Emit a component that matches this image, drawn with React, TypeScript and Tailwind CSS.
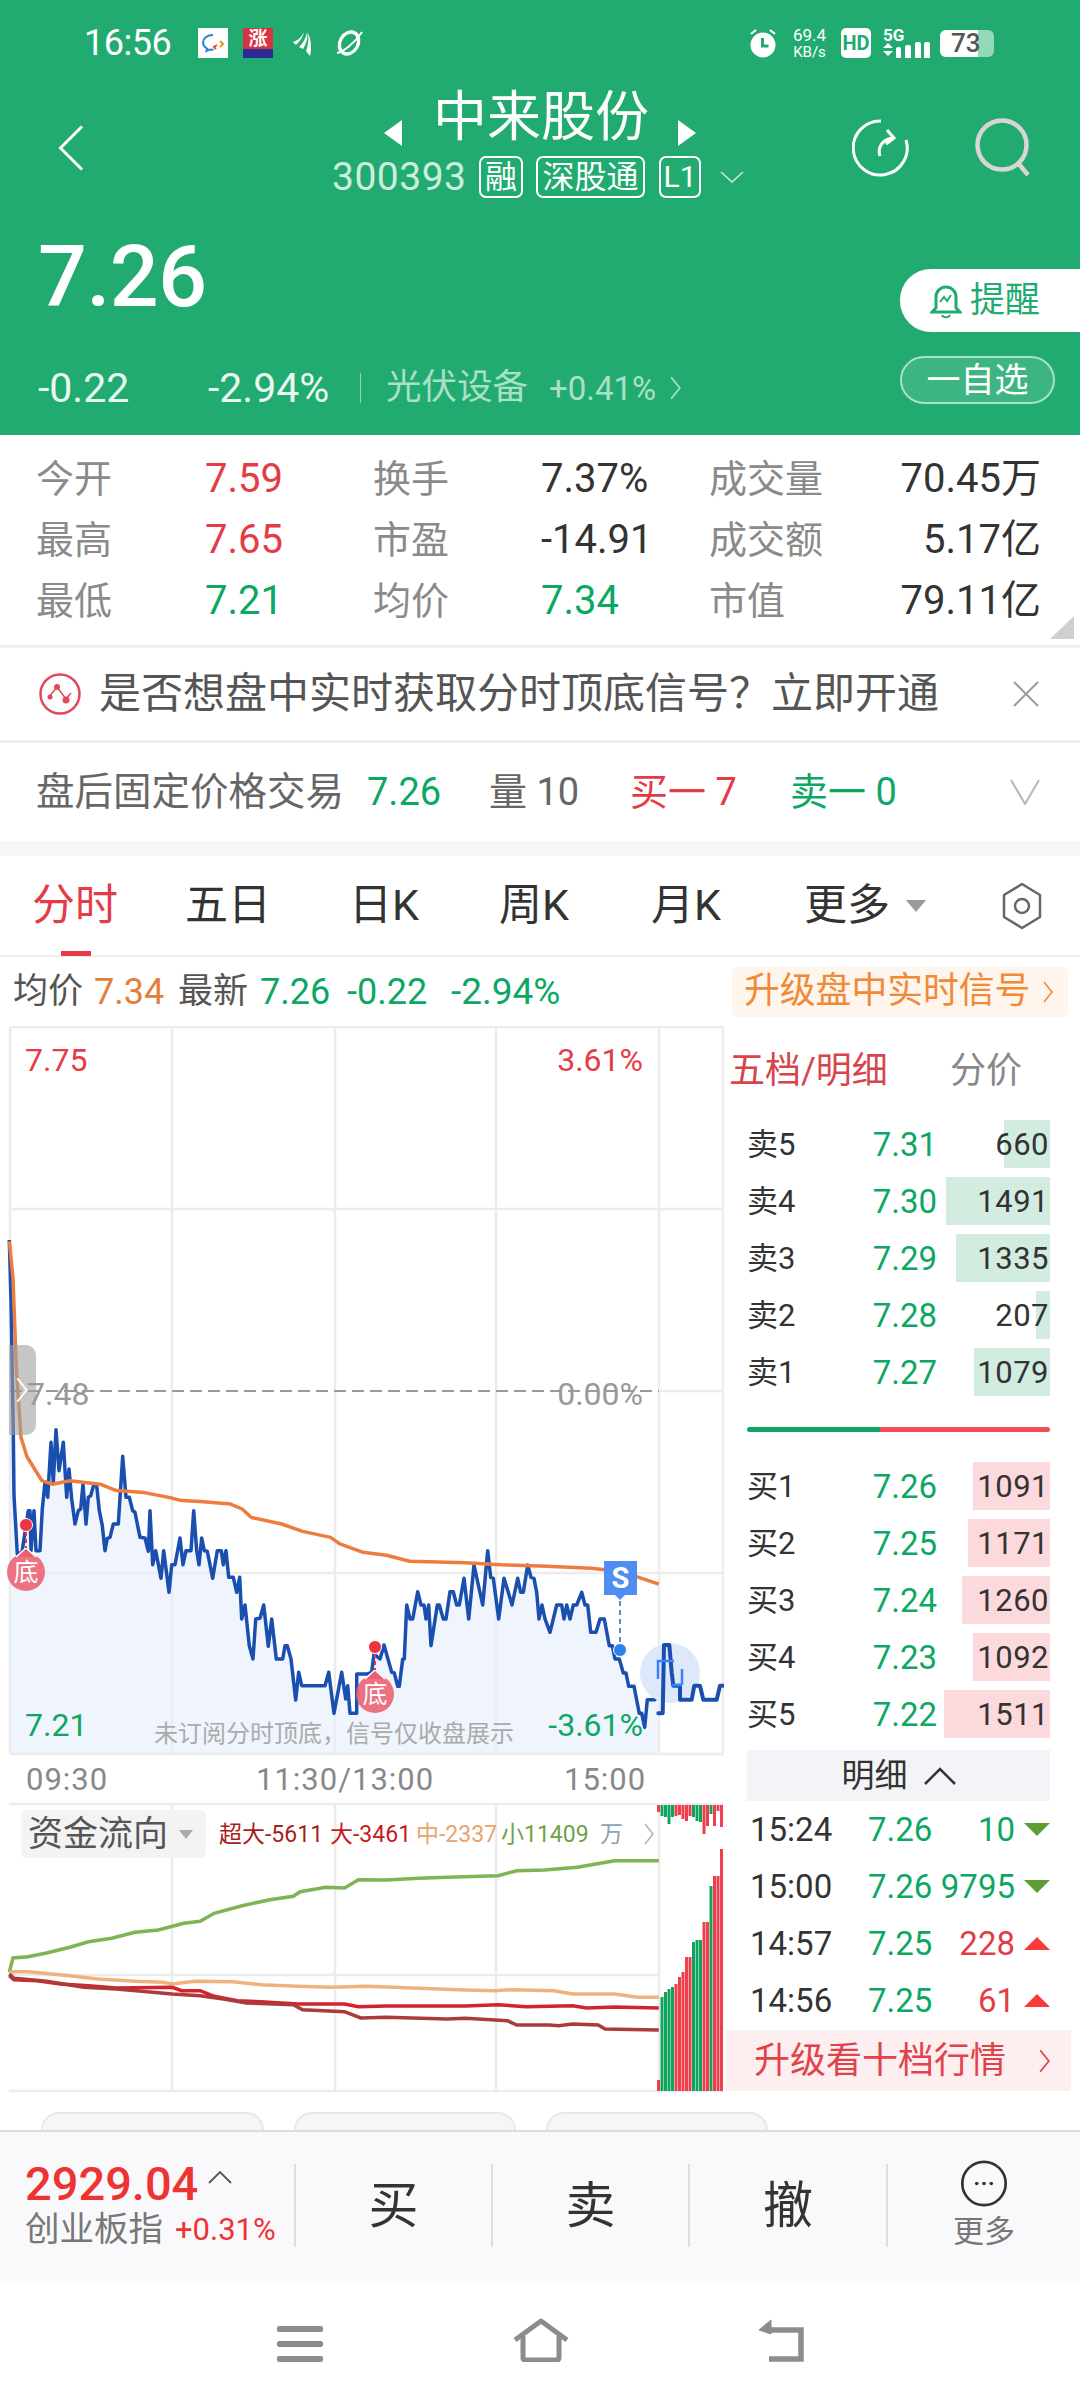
import { ReactNode } from "react";

const RED = "text-[#e43c46]";
const GREEN = "text-[#0da764]";

type Pt = [number, number];

const place = (pts: Pt[], kx: number, ky: number, ox: number, oy: number): Pt[] =>
  pts.map(([x, y]) => [x / kx + ox, y / ky + oy]);

const line = (pts: Pt[]) => pts.map(([x, y]) => `${x.toFixed(1)},${y.toFixed(1)}`).join(" ");

// morning half of the price line
const PRICE_AM: Pt[] = [[28,-177],[33,0],[40,400],[42,590],[52,765],[66,760],[75,700],[85,635],[90,635],[93,755],[102,635],[108,755],[120,755],[127,630],[135,550],[143,595],[153,430],[160,550],[168,392],[177,515],[190,430],[200,595],[207,510],[215,600],[225,675],[235,635],[242,630],[249,555],[258,675],[265,595],[272,590],[282,555],[290,560],[298,635],[307,680],[315,755],[322,718],[330,715],[340,675],[355,675],[368,472],[378,595],[388,595],[398,635],[405,640],[420,715],[435,717],[445,757],[450,635],[458,797],[467,755],[483,838],[491,755],[507,880],[515,797],[525,797],[540,717],[549,797],[558,755],[573,755],[581,635],[590,755],[597,797],[605,717],[613,755],[622,757],[638,838],[652,755],[664,755],[670,797],[678,755],[686,835],[700,835],[710,880],[719,835],[725,960],[735,918],[748,1040],[759,1080],[767,960],[780,958],[791,918],[805,1042],[815,960],[829,1080],[848,1080],[855,1040],[862,1040],[873,1080],[887,1203],[896,1120],[905,1160],[975,1160],[986,1120],[1002,1243],[1025,1120],[1037,1200],[1043,1160],[1050,1243],[1070,1243]];

// afternoon half of the price line
const PRICE_PM: Pt[] = [[-10,585],[10,585],[22,585],[35,580],[42,525],[60,540],[72,498],[95,580],[103,582],[113,622],[118,622],[128,540],[133,540],[140,378],[150,420],[158,420],[173,338],[183,378],[192,378],[198,420],[206,378],[213,500],[232,378],[238,378],[250,420],[258,420],[270,338],[280,338],[290,378],[298,378],[312,298],[326,420],[342,258],[368,378],[383,215],[392,295],[400,298],[416,420],[432,298],[445,340],[456,378],[473,298],[482,340],[490,340],[503,258],[513,295],[522,298],[530,340],[537,420],[546,378],[555,420],[570,460],[580,420],[590,378],[605,378],[612,420],[620,378],[630,420],[640,378],[650,378],[665,340],[675,378],[683,378],[692,460],[708,460],[720,420],[733,420],[748,500],[757,500],[765,540],[778,540],[790,582],[798,582],[806,622],[822,622],[838,703],[845,703],[854,745],[862,662],[885,662],[895,620]];

const AFTER_HOURS: Pt[] = [[895,703],[908,703],[912,498],[928,498],[935,580],[940,620],[960,620],[960,662],[995,662],[1003,620],[1020,620],[1030,662],[1070,662],[1080,620],[1088,620]];

const AVG: Pt[] = [[20,447],[28,520],[35,700],[45,840],[58,880],[90,928],[112,935],[150,928],[215,935],[250,948],[310,952],[365,962],[390,968],[430,970],[495,975],[520,985],[540,1002],[605,1015],[650,1030],[710,1042],[730,1055],[780,1072],[830,1078],[880,1090],[920,1091],[1000,1093],[1075,1097],[1175,1100],[1270,1104],[1330,1110],[1380,1125],[1415,1136]];

const FLOW_SMALL: Pt[] = [[20,580],[28,537],[60,533],[100,522],[150,505],[190,488],[240,478],[290,460],[340,453],[395,433],[430,427],[460,403],[520,380],[580,362],[630,352],[645,338],[700,325],[740,327],[770,302],[830,303],[900,298],[960,295],[1070,290],[1110,275],[1170,273],[1240,265],[1320,245],[1415,245]];
const FLOW_MID: Pt[] = [[20,580],[30,578],[60,578],[150,590],[210,600],[290,607],[350,610],[370,615],[420,607],[500,608],[560,617],[640,622],[710,625],[790,622],[900,628],[1000,633],[1060,635],[1100,632],[1190,635],[1230,645],[1320,645],[1370,655],[1415,655]];
const FLOW_BIG: Pt[] = [[20,590],[30,602],[80,605],[130,615],[190,620],[250,627],[370,625],[390,635],[430,635],[460,652],[510,665],[560,668],[640,675],[740,675],[770,683],[830,681],[1000,681],[1070,677],[1130,683],[1230,680],[1260,687],[1320,684],[1415,687]];
const FLOW_HUGE: Pt[] = [[20,585],[30,598],[100,607],[180,625],[250,630],[370,645],[430,650],[480,660],[530,672],[630,677],[650,692],[740,698],[775,717],[830,715],[960,720],[1000,718],[1090,725],[1110,738],[1180,738],[1200,740],[1230,735],[1285,738],[1300,750],[1415,753]];

// after-hours volume: colour, bottom bar top y, hanging bar bottom y
const FLOW_BARS: [string, number, number][] = [
  ["#ef3f4d", 2081, 1813], ["#0fa35e", 1998, 1817], ["#0fa35e", 1993, 1818], ["#0fa35e", 1990, 1825],
  ["#0fa35e", 1988, 1818], ["#ef3f4d", 1985, 1817], ["#ef3f4d", 1978, 1816], ["#ef3f4d", 1973, 1820],
  ["#ef3f4d", 1958, 1822], ["#ef3f4d", 1958, 1817], ["#0fa35e", 1943, 1818], ["#0fa35e", 1941, 1822],
  ["#0fa35e", 1941, 1823], ["#ef3f4d", 1923, 1835], ["#ef3f4d", 1923, 1827], ["#0fa35e", 1887, 1815],
  ["#ef3f4d", 1877, 1827], ["#ef3f4d", 1877, 1812], ["#ef3f4d", 1850, 1828],
];

const ASKS = [
  ["卖5", "7.31", "660", 46], ["卖4", "7.30", "1491", 104], ["卖3", "7.29", "1335", 94],
  ["卖2", "7.28", "207", 14], ["卖1", "7.27", "1079", 76],
] as const;

const BIDS = [
  ["买1", "7.26", "1091", 77], ["买2", "7.25", "1171", 82], ["买3", "7.24", "1260", 88],
  ["买4", "7.23", "1092", 77], ["买5", "7.22", "1511", 106],
] as const;

const TICKS = [
  ["15:24", "7.26", "10", false], ["15:00", "7.26", "9795", false],
  ["14:57", "7.25", "228", true], ["14:56", "7.25", "61", true],
] as const;

function Chevron({ className }: { className?: string }) {
  return (
    <svg viewBox="0 0 12 24" className={className} fill="none" stroke="currentColor" strokeWidth="1.6">
      <path d="M2 2l8 10-8 10" />
    </svg>
  );
}

function StatusBar() {
  return (
    <div className="flex h-[86px] items-center">
      <span className="ml-[84px] w-[94px] text-[36px] leading-none tracking-[-0.5px] text-white">16:56</span>
      <div className="ml-[20px] flex h-[30px] w-[30px] items-center justify-center bg-white">
        <svg viewBox="0 0 30 30" className="h-[30px] w-[30px]" fill="none">
          <path d="M15 7c-6 0-10 3.400-10 7.500 0 2.500 1.500 4.500 4 6l-.5 2.500 3-1.500c1 .2 2.500.3 4 .2" stroke="#2a82d8" strokeWidth="2" />
          <path d="M22 13l3 3-3 3" stroke="#e89a2a" strokeWidth="2.200" />
          <path d="M18 21l-2-2 3-2" stroke="#d8503a" strokeWidth="2" />
        </svg>
      </div>
      <div className="ml-[15px] flex h-[30px] w-[30px] flex-col items-center overflow-hidden bg-[#d83340]">
        <span className="h-[21px] text-[19px] leading-[21px] font-bold text-white">涨</span>
        <span className="h-[9px] w-full bg-[#2c2a94]" />
      </div>
      <svg viewBox="0 0 22 26" className="ml-[19px] h-[26px] w-[22px]" fill="#fff">
        <path d="M1 12c4-1 8-4 11-10-1 5-4 9-8 13zM7 17c3-3 7-8 8-15 1 5 0 11-4 17zM14 21c2-5 3-12 2-18 3 6 4 16 2 23z" />
      </svg>
      <svg viewBox="0 0 30 28" className="ml-[20px] h-[28px] w-[30px]" fill="none" stroke="#fff" strokeWidth="3.400">
        <ellipse cx="15" cy="14" rx="9" ry="11.500" transform="rotate(30 15 14)" />
        <path d="M3 24c6-1 18-10 25-21" strokeWidth="2" />
      </svg>
      <svg viewBox="0 0 28 30" className="ml-[385px] h-[30px] w-[28px]" fill="#fff">
        <circle cx="14" cy="17" r="12.500" />
        <path d="M2 6l5-4M26 6l-5-4" stroke="#fff" strokeWidth="2.200" />
        <path d="M13.500 10v8h6" fill="none" stroke="#22ab70" strokeWidth="3" />
      </svg>
      <div className="ml-[14px] flex w-[37px] flex-col items-center text-white">
        <span className="text-[17px] leading-[18px]">69.4</span>
        <span className="text-[15px] leading-[17px]">KB/s</span>
      </div>
      <div className="ml-[13px] flex h-[30px] w-[30px] items-center justify-center rounded-[5px] bg-white text-[20px] leading-none font-bold text-[#22ab70]">
        HD
      </div>
      <div className="ml-[12px] flex h-[30px] w-[48px] flex-col">
        <span className="text-[17px] leading-[14px] font-bold text-white">5G</span>
        <svg viewBox="0 0 48 16" className="h-[16px] w-[48px]" fill="#fff">
          <path d="M0 6l5-5 5 5zM0 9h10l-5 5zM13 7a2 2 0 012-2h1a2 2 0 012 2v9h-5zM22 5a2 2 0 012-2h2a2 2 0 012 2v11h-6zM32 2a2 2 0 012-2h2a2 2 0 012 2v14h-6zM41 2a2 2 0 012-2h2a2 2 0 012 2v14h-6z" />
        </svg>
      </div>
      <div className="ml-[9px] flex h-[27px] w-[54px] items-center overflow-hidden rounded-[6px] bg-[#93d9b8]">
        <span className="flex h-full w-[38px] shrink-0 items-center bg-white pl-[11px] text-[26px] leading-none font-medium whitespace-nowrap text-[#555]">73</span>
      </div>
    </div>
  );
}

function TitleBar() {
  return (
    <div className="flex h-[124px] items-center">
      <svg viewBox="0 0 26 46" className="ml-[58px] h-[46px] w-[26px]" fill="none" stroke="#fff" strokeWidth="3">
        <path d="M24 1.500L2.500 23 24 44.500" />
      </svg>
      <div className="mb-[8px] ml-[248px] flex w-[412px] flex-col">
        <div className="ml-[52px] flex h-[56px] items-center">
          <span className="mt-[30px] h-0 w-0 border-y-[13px] border-r-[18px] border-y-transparent border-r-white" />
          <span className="ml-[31px] w-[216px] text-[54px] leading-none whitespace-nowrap text-white">中来股份</span>
          <span className="mt-[30px] ml-[29px] h-0 w-0 border-y-[13px] border-l-[18px] border-y-transparent border-l-white" />
        </div>
        <div className="mt-[10px] flex h-[42px] items-center text-white">
          <span className="w-[147px] text-[39px] leading-none tracking-[0.5px] text-[#cdeede]">300393</span>
          <span className="flex h-[42px] w-[44px] items-center justify-center rounded-[7px] border-2 border-white text-[32px] leading-none">融</span>
          <span className="ml-[13px] flex h-[42px] w-[109px] items-center justify-center rounded-[7px] border-2 border-white text-[32px] leading-none whitespace-nowrap">深股通</span>
          <span className="ml-[14px] flex h-[42px] w-[42px] items-center justify-center rounded-[7px] border-2 border-white text-[30px] leading-none">L1</span>
          <svg viewBox="0 0 24 12" className="ml-[19px] h-[12px] w-[24px]" fill="none" stroke="#cdeede" strokeWidth="1.500">
            <path d="M1 1l11 10L23 1" />
          </svg>
        </div>
      </div>
      <svg viewBox="0 0 58 58" className="ml-[108px] h-[58px] w-[58px]" fill="none" stroke="#fff" strokeWidth="3">
        <path d="M29 2A27 27 0 1054 21" />
        <path d="M28 37c-3-9 3-17 13-18M35 11l7 8-8 6" />
      </svg>
      <svg viewBox="0 0 58 60" className="ml-[64px] h-[60px] w-[58px]" fill="none" stroke="#d6d6d6" strokeWidth="4.500">
        <circle cx="28" cy="27" r="24.500" />
        <path d="M44 45l10 12" />
      </svg>
    </div>
  );
}

function QuoteHead() {
  return (
    <div className="flex h-[225px] justify-between">
      <div className="pt-[22px] pl-[38px]">
        <div className="h-[90px] text-[86px] leading-[90px] font-medium tracking-[-0.5px] text-white">7.26</div>
        <div className="mt-[44px] flex h-[44px] items-center whitespace-nowrap">
          <span className="w-[170px] text-[41px] leading-none text-[#e9f8f0]">-0.22</span>
          <span className="w-[152px] text-[41px] leading-none text-[#e9f8f0]">-2.94%</span>
          <span className="h-[30px] w-[1px] bg-[#8fd6b5]" />
          <span className="ml-[25px] text-[35.5px] leading-none text-[#a9e0c6]">光伏设备</span>
          <span className="ml-[21px] text-[33px] leading-none text-[#a9e0c6]">+0.41%</span>
          <Chevron className="ml-[13px] h-[28px] w-[13px] text-[#a9e0c6]" />
        </div>
      </div>
      <div className="flex w-[180px] flex-col pt-[59px]">
        <div className="flex h-[63px] items-center rounded-l-[31px] bg-white pl-[30px]">
          <svg viewBox="0 0 32 36" className="h-[36px] w-[32px]" fill="none" stroke="#22ab70" strokeWidth="3">
            <path d="M6 25V14a10 10 0 0120 0v11l4 4H2z" />
            <path d="M12 32c1 3 7 3 8 0M10 19l4-5 3 4 4-6" strokeWidth="2" />
          </svg>
          <span className="ml-[8px] text-[35px] leading-none whitespace-nowrap text-[#22ab70]">提醒</span>
        </div>
        <div className="mt-[24px] flex h-[48px] w-[155px] items-center justify-center rounded-[24px] border-2 border-[#a9e0c6] bg-[#3db582] text-[34px] leading-none whitespace-nowrap text-white">
          一自选
        </div>
      </div>
    </div>
  );
}

function Stat({ label, value, tone }: { label: string; value: string; tone: string }) {
  return (
    <>
      <span className="flex items-center text-[38px] leading-none whitespace-nowrap text-[#8a8a8a]">{label}</span>
      <span className={`flex items-center text-[40px] leading-none ${tone}`}>{value}</span>
    </>
  );
}

function Stats() {
  return (
    <div className="relative h-[210px] pt-[14px]">
      <div className="ml-[36px] grid h-[182px] w-[1005px] grid-cols-[169px_168px_168px_168px_168px_164px] grid-rows-3">
        <Stat label="今开" value="7.59" tone={RED} />
        <Stat label="换手" value="7.37%" tone="text-[#333]" />
        <span className="flex items-center text-[38px] leading-none whitespace-nowrap text-[#8a8a8a]">成交量</span>
        <span className="flex items-center justify-end text-[40px] leading-none whitespace-nowrap text-[#333]">70.45万</span>
        <Stat label="最高" value="7.65" tone={RED} />
        <Stat label="市盈" value="-14.91" tone="text-[#333]" />
        <span className="flex items-center text-[38px] leading-none whitespace-nowrap text-[#8a8a8a]">成交额</span>
        <span className="flex items-center justify-end text-[40px] leading-none whitespace-nowrap text-[#333]">5.17亿</span>
        <Stat label="最低" value="7.21" tone={GREEN} />
        <Stat label="均价" value="7.34" tone={GREEN} />
        <span className="flex items-center text-[38px] leading-none whitespace-nowrap text-[#8a8a8a]">市值</span>
        <span className="flex items-center justify-end text-[40px] leading-none whitespace-nowrap text-[#333]">79.11亿</span>
      </div>
      <span className="absolute right-[6px] bottom-[6px] h-0 w-0 border-b-[23px] border-l-[24px] border-b-[#cfcfcf] border-l-transparent" />
    </div>
  );
}

function Notice() {
  return (
    <div className="flex h-[98px] items-center border-y-[3px] border-[#eeeeee]">
      <svg viewBox="0 0 42 42" className="ml-[39px] h-[42px] w-[42px]" fill="none" stroke="#e4465a" strokeWidth="2.500">
        <circle cx="21" cy="21" r="19.500" />
        <path d="M10 24l8-10 9 12 5-6" strokeWidth="1.500" />
        <g fill="#e4465a" stroke="none">
          <circle cx="18" cy="14" r="3" />
          <circle cx="11" cy="24" r="2.500" />
          <circle cx="27" cy="27" r="3.500" />
        </g>
      </svg>
      <span className="ml-[18px] w-[839px] text-[42px] leading-none whitespace-nowrap text-[#555]">是否想盘中实时获取分时顶底信号？立即开通</span>
      <svg viewBox="0 0 28 28" className="ml-[74px] h-[28px] w-[28px]" fill="none" stroke="#9c9c9c" strokeWidth="2">
        <path d="M2 2l24 24M26 2L2 26" />
      </svg>
    </div>
  );
}

function AfterHours() {
  return (
    <div className="flex h-[98px] items-center text-[38px] leading-none whitespace-nowrap">
      <span className="ml-[36px] w-[331px] text-[38.500px] text-[#666]">盘后固定价格交易</span>
      <span className={`w-[122px] text-[38px] ${GREEN}`}>7.26</span>
      <span className="w-[141px] text-[#666]">量 10</span>
      <span className={`w-[160px] ${RED}`}>买一 7</span>
      <span className={`w-[220px] ${GREEN}`}>卖一 0</span>
      <svg viewBox="0 0 30 26" className="h-[26px] w-[30px]" fill="none" stroke="#b5b5b5" strokeWidth="2">
        <path d="M1 1l14 24L29 1" />
      </svg>
    </div>
  );
}

function Tabs() {
  return (
    <div className="relative flex h-[101px] items-center border-b-[2px] border-[#eeeeee] pl-[32px] text-[43px] leading-none whitespace-nowrap text-[#333]">
      <span className="w-[153px] text-[#e43c46]">分时</span>
      <span className="w-[164px]">五日</span>
      <span className="w-[150px]">日K</span>
      <span className="w-[152px]">周K</span>
      <span className="w-[153px]">月K</span>
      <span className="w-[102px]">更多</span>
      <span className="h-0 w-0 border-x-[10px] border-t-[12px] border-x-transparent border-t-[#999]" />
      <svg viewBox="0 0 42 48" className="ml-[75px] h-[48px] w-[42px]" fill="none" stroke="#666" strokeWidth="2.500">
        <path d="M21 2l18 11v22L21 46 3 35V13z" strokeLinejoin="round" />
        <circle cx="21" cy="24" r="7" />
      </svg>
      <span className="absolute bottom-[-1px] left-[61px] h-[5px] w-[30px] bg-[#e43c46]" />
    </div>
  );
}

function InfoRow() {
  return (
    <div className="flex h-[69px] items-center text-[35px] leading-none whitespace-nowrap">
      <span className="ml-[13px] w-[81px] text-[#555]">均价</span>
      <span className="w-[84px] text-[36px] text-[#e0803c]">7.34</span>
      <span className="w-[82px] text-[#555]">最新</span>
      <span className={`w-[87px] text-[36px] ${GREEN}`}>7.26</span>
      <span className={`w-[104px] text-[36px] ${GREEN}`}>-0.22</span>
      <span className={`w-[281px] text-[37px] ${GREEN}`}>-2.94%</span>
      <div className="flex h-[50px] w-[336px] items-center rounded-[6px] bg-[#fef5ec] pl-[12px] text-[35.800px] text-[#f08a38]">
        升级盘中实时信号
        <Chevron className="ml-[12px] h-[24px] w-[12px]" />
      </div>
    </div>
  );
}

function Signal({ x, dotY, badgeY }: { x: number; dotY: number; badgeY: number }) {
  return (
    <g>
      <circle cx={x} cy={badgeY} r="19" fill="#ec5f70" fillOpacity="0.88" />
      <path d={`M${x - 10} ${badgeY - 15}l10-9 10 9`} fill="#ec5f70" stroke="#fff" strokeWidth="1.500" />
      <line x1={x} y1={dotY} x2={x} y2={badgeY - 24} stroke="#e8344a" strokeWidth="2" strokeDasharray="4 3" />
      <circle cx={x} cy={dotY} r="6.500" fill="#ee3344" stroke="#fff" strokeWidth="1" />
      <text x={x} y={badgeY + 9} textAnchor="middle" fontSize="25" fill="#fff">底</text>
    </g>
  );
}

function PriceChart() {
  const pts = [...place(PRICE_AM, 3, 3, 0, 1300), ...place(PRICE_PM, 3, 3, 360, 1480)];
  const avg = place(AVG, 2.148, 2.01, 0, 1020);
  const after = place(AFTER_HOURS, 3, 3, 360, 1480);
  return (
    <div className="relative h-[730px] w-[724px]">
      <svg viewBox="0 1027 724 730" className="h-[730px] w-[724px]" fill="none">
        <path d="M10 1028H723M10 1210H723M10 1574H723M10 1755H723M10 1028V1755M172 1028V1755M335 1028V1755M496 1028V1755M659 1028V1755M723 1028V1755M659 1392H723" stroke="#ececec" strokeWidth="2.500" />
        <polygon points={`${line(pts)} 659,1755 10,1755`} fill="#e4edfc" fillOpacity="0.6" />
        <line x1="10" y1="1392" x2="659" y2="1392" stroke="#9a9a9a" strokeWidth="2" strokeDasharray="12 6" />
        <polyline points={line(pts)} stroke="#1a4fb0" strokeWidth="3.500" strokeLinejoin="round" />
        <circle cx="670" cy="1674" r="30" fill="#dde8fb" />
        <polyline points={line(after)} stroke="#1a4fb0" strokeWidth="4" strokeLinejoin="round" strokeLinecap="round" />
        <path d="M658 1680v-18h16M682 1670v16M672 1686h10" stroke="#3b82f6" strokeWidth="2.500" />
        <polyline points={line(avg)} stroke="#ee7c3e" strokeWidth="3.500" strokeLinejoin="round" />
        <Signal x={26} dotY={1526} badgeY={1573} />
        <Signal x={375} dotY={1648} badgeY={1695} />
        <path d="M604 1562h33v34h-12l-5 5-5-5h-11z" fill="#4f8ef0" />
        <text x="620.500" y="1589" textAnchor="middle" fontSize="29" fontWeight="700" fill="#fff">S</text>
        <line x1="620" y1="1602" x2="620" y2="1645" stroke="#5a8fb8" strokeWidth="2" strokeDasharray="5 4" />
        <circle cx="620" cy="1651" r="6.500" fill="#2f7ff0" stroke="#fff" strokeWidth="1" />
      </svg>
      <span className="absolute top-[16px] left-[25px] text-[32px] leading-[36px] text-[#e43c46]">7.75</span>
      <span className="absolute top-[16px] right-[81px] text-[32px] leading-[36px] text-[#e43c46]">3.61%</span>
      <div className="absolute top-[319px] left-[9px] flex h-[90px] w-[27px] items-center rounded-r-[10px] bg-[#a0a0a0]/60">
        <Chevron className="ml-[6px] h-[30px] w-[14px] text-white" />
      </div>
      <span className="absolute top-[350px] left-[27px] text-[32px] leading-[36px] text-[#999]">7.48</span>
      <span className="absolute top-[350px] right-[81px] text-[32px] leading-[36px] text-[#999]">0.00%</span>
      <span className="absolute top-[681px] left-[25px] text-[32px] leading-[36px] text-[#0da764]">7.21</span>
      <span className="absolute top-[681px] right-[81px] text-[32px] leading-[36px] text-[#0da764]">-3.61%</span>
      <span className="absolute top-[693px] left-[154px] text-[24px] leading-[30px] whitespace-nowrap text-[#aaaaaa]">未订阅分时顶底，信号仅收盘展示</span>
    </div>
  );
}

function FlowChart() {
  const scale = (pts: Pt[]) => line(place(pts, 2.148, 3, 0, 1780));
  return (
    <div className="relative h-[290px] w-[724px]">
      <svg viewBox="0 1804 724 290" className="h-[290px] w-[724px]" fill="none">
        <path d="M9 1805H723M9 1976H659M9 2092H723M172 1805V2092M335 1805V2092M496 1805V2092M659 1805V2092" stroke="#ececec" strokeWidth="2.500" />
        {FLOW_BARS.map(([color, top, bottom], i) => (
          <g key={i} fill={color}>
            <rect x={657 + i * 3.5} y={top} width="3" height={2092 - top} />
            <rect x={657 + i * 3.5} y={1806} width="3" height={bottom - 1806} />
          </g>
        ))}
        <polyline points={scale(FLOW_SMALL)} stroke="#7fb356" strokeWidth="3.500" />
        <polyline points={scale(FLOW_MID)} stroke="#f0b27c" strokeWidth="3.500" />
        <polyline points={scale(FLOW_BIG)} stroke="#d4232c" strokeWidth="3.500" />
        <polyline points={scale(FLOW_HUGE)} stroke="#ad3a3a" strokeWidth="3.500" />
      </svg>
      <div className="absolute top-[7px] left-[21px] flex h-[48px] w-[185px] items-center rounded-[6px] bg-[#f3f3f3] pl-[7px] text-[35px] leading-none whitespace-nowrap text-[#555]">
        资金流向
        <span className="ml-[11px] h-0 w-0 border-x-[7px] border-t-[9px] border-x-transparent border-t-[#aaa]" />
      </div>
      <div className="absolute top-[17px] left-[219px] flex h-[28px] items-center text-[23px] leading-none whitespace-nowrap">
        <span className="w-[111px] text-[#a81e1e]">超大-5611</span>
        <span className="w-[86px] text-[#c8191e]">大-3461</span>
        <span className="w-[85px] text-[#e9a46c]">中-2337</span>
        <span className="w-[99px] text-[#6ba544]">小11409</span>
        <span className="w-[42px] text-[#8ea2b8]">万</span>
        <Chevron className="h-[24px] w-[14px] text-[#b5b5b5]" />
      </div>
    </div>
  );
}

function BookRow({ label, price, volume, bar, barColor }: { label: string; price: string; volume: string; bar: number; barColor: string }) {
  return (
    <div className="relative ml-[23px] flex h-[57px] w-[303px] items-center text-[31px] leading-none">
      <span className={`absolute top-[4px] right-0 bottom-[5px] ${barColor}`} style={{ width: bar }} />
      <span className="relative w-[100px] whitespace-nowrap text-[#333]">{label}</span>
      <span className={`relative w-[90px] text-right text-[33px] ${GREEN}`}>{price}</span>
      <span className="relative flex-1 pr-[1px] text-right tracking-[0.5px] text-[#333]">{volume}</span>
    </div>
  );
}

function OrderBook() {
  return (
    <div className="w-[356px]">
      <div className="flex h-[90px] items-center pl-[5px] text-[36px] leading-none whitespace-nowrap">
        <span className="w-[221px] text-[#d9444b]">五档/明细</span>
        <span className="text-[#888]">分价</span>
      </div>
      {ASKS.map(([label, price, volume, bar]) => (
        <BookRow key={label} label={label} price={price} volume={volume} bar={bar} barColor="bg-[#d2ece0]" />
      ))}
      <div className="mt-[26px] ml-[23px] flex h-[5px] w-[303px] overflow-hidden rounded-full">
        <span className="w-[133px] bg-[#0da764]" />
        <span className="flex-1 bg-[#f04f54]" />
      </div>
      <div className="h-[26px]" />
      {BIDS.map(([label, price, volume, bar]) => (
        <BookRow key={label} label={label} price={price} volume={volume} bar={bar} barColor="bg-[#fcd9dc]" />
      ))}
      <div className="mt-[7px] ml-[23px] flex h-[51px] w-[303px] items-center justify-center bg-[#f3f4f7] text-[33px] leading-none text-[#333]">
        明细
        <svg viewBox="0 0 32 18" className="ml-[16px] h-[18px] w-[32px]" fill="none" stroke="#333" strokeWidth="2.500">
          <path d="M1 17L16 2l15 15" />
        </svg>
      </div>
      {TICKS.map(([time, price, volume, up]) => (
        <div key={time} className="ml-[26px] flex h-[57px] items-center text-[33px] leading-none">
          <span className="w-[118px] text-[#333]">{time}</span>
          <span className={`w-[66px] ${GREEN}`}>{price}</span>
          <span className={`w-[81px] text-right ${up ? RED : GREEN}`}>{volume}</span>
          {up ? (
            <span className="ml-[9px] h-0 w-0 border-x-[13px] border-b-[13px] border-x-transparent border-b-[#f83a3a]" />
          ) : (
            <span className="ml-[9px] h-0 w-0 border-x-[13px] border-t-[13px] border-x-transparent border-t-[#5c9e33]" />
          )}
        </div>
      ))}
      <div className="mt-[1px] ml-[2px] flex h-[61px] w-[345px] items-center bg-[#fdeeef] pl-[28px] text-[36px] leading-none whitespace-nowrap text-[#e0434c]">
        升级看十档行情
        <Chevron className="ml-[32px] h-[26px] w-[13px]" />
      </div>
    </div>
  );
}

function ActionCell({ children, width }: { children: ReactNode; width: string }) {
  return (
    <div className={`flex h-[83px] items-center justify-center border-l-[2px] border-[#dedede] text-[50px] leading-none text-[#333] ${width}`}>
      {children}
    </div>
  );
}

function Footer() {
  return (
    <div className="flex h-[151px] items-start border-t-[2px] border-[#dddddd] bg-[#f9f9fb] pt-[32px]">
      <div className="w-[294px] pl-[25px] whitespace-nowrap">
        <div className="flex h-[38px] items-center">
          <span className="text-[47px] leading-none font-medium text-[#ee3333]">2929.04</span>
          <svg viewBox="0 0 24 14" className="mb-[12px] ml-[10px] h-[14px] w-[24px]" fill="none" stroke="#555" strokeWidth="1.800">
            <path d="M1 13L12 2l11 11" />
          </svg>
        </div>
        <div className="mt-[7px] flex h-[40px] items-center">
          <span className="text-[34.500px] leading-none text-[#777]">创业板指</span>
          <span className="ml-[12px] text-[31px] leading-none text-[#ee3333]">+0.31%</span>
        </div>
      </div>
      <ActionCell width="w-[197px]">买</ActionCell>
      <ActionCell width="w-[197px]">卖</ActionCell>
      <ActionCell width="w-[198px]">撤</ActionCell>
      <div className="flex h-[83px] w-[194px] flex-col items-center border-l-[2px] border-[#dedede]">
        <svg viewBox="0 0 52 52" className="-mt-[4px] h-[52px] w-[52px]" fill="none" stroke="#333" strokeWidth="3">
          <circle cx="26" cy="26" r="24" />
          <g fill="#333" stroke="none">
            <circle cx="18" cy="26" r="2" />
            <circle cx="26" cy="26" r="2" />
            <circle cx="34" cy="26" r="2" />
          </g>
        </svg>
        <span className="mt-[9px] text-[31px] leading-none whitespace-nowrap text-[#777]">更多</span>
      </div>
    </div>
  );
}

function NavBar() {
  return (
    <div className="flex h-[126px] items-start bg-white pt-[37px]">
      <svg viewBox="0 0 46 36" className="mt-[8px] ml-[277px] h-[36px] w-[46px]" fill="#8c8c8c">
        <rect x="0" y="0" width="46" height="6" rx="2" />
        <rect x="0" y="15" width="46" height="6" rx="2" />
        <rect x="0" y="30" width="46" height="6" rx="2" />
      </svg>
      <svg viewBox="0 0 58 44" className="ml-[189px] h-[44px] w-[58px]" fill="none" stroke="#8c8c8c" strokeWidth="5">
        <path d="M3 22L29 3l26 19" strokeLinejoin="round" />
        <path d="M11 18v22a2 2 0 002 2h32a2 2 0 002-2V18" />
      </svg>
      <svg viewBox="0 0 48 44" className="ml-[187px] h-[44px] w-[48px]" fill="none" stroke="#8c8c8c" strokeWidth="5.500">
        <path d="M12 12h32v29H12" />
        <path d="M14 2L2 12l12 4z" fill="#8c8c8c" strokeWidth="1" />
      </svg>
    </div>
  );
}

export default function App() {
  return (
    <div className="h-[2408px] w-[1080px] overflow-hidden bg-white font-[Roboto,'Noto_Sans_CJK_SC',sans-serif]">
      <div className="h-[435px] bg-[#22ab70]">
        <StatusBar />
        <TitleBar />
        <QuoteHead />
      </div>
      <Stats />
      <Notice />
      <AfterHours />
      <div className="h-[15px] bg-[#f6f6f6]" />
      <Tabs />
      <InfoRow />
      <div className="flex">
        <div className="w-[724px]">
          <PriceChart />
          <div className="flex h-[47px] items-center text-[31px] leading-none tracking-[1px] whitespace-nowrap text-[#888]">
            <span className="ml-[26px] w-[230px]">09:30</span>
            <span className="w-[308px]">11:30/13:00</span>
            <span>15:00</span>
          </div>
          <FlowChart />
        </div>
        <OrderBook />
      </div>
      <div className="flex h-[37px] items-end gap-[30px] overflow-hidden pl-[41px]">
        <span className="h-[18px] w-[223px] rounded-t-[30px] border-x-2 border-t-2 border-[#e8e8e8] bg-[#f6f6f6]" />
        <span className="h-[18px] w-[222px] rounded-t-[30px] border-x-2 border-t-2 border-[#e8e8e8] bg-[#f6f6f6]" />
        <span className="h-[18px] w-[222px] rounded-t-[30px] border-x-2 border-t-2 border-[#e8e8e8] bg-[#f6f6f6]" />
      </div>
      <Footer />
      <NavBar />
    </div>
  );
}
